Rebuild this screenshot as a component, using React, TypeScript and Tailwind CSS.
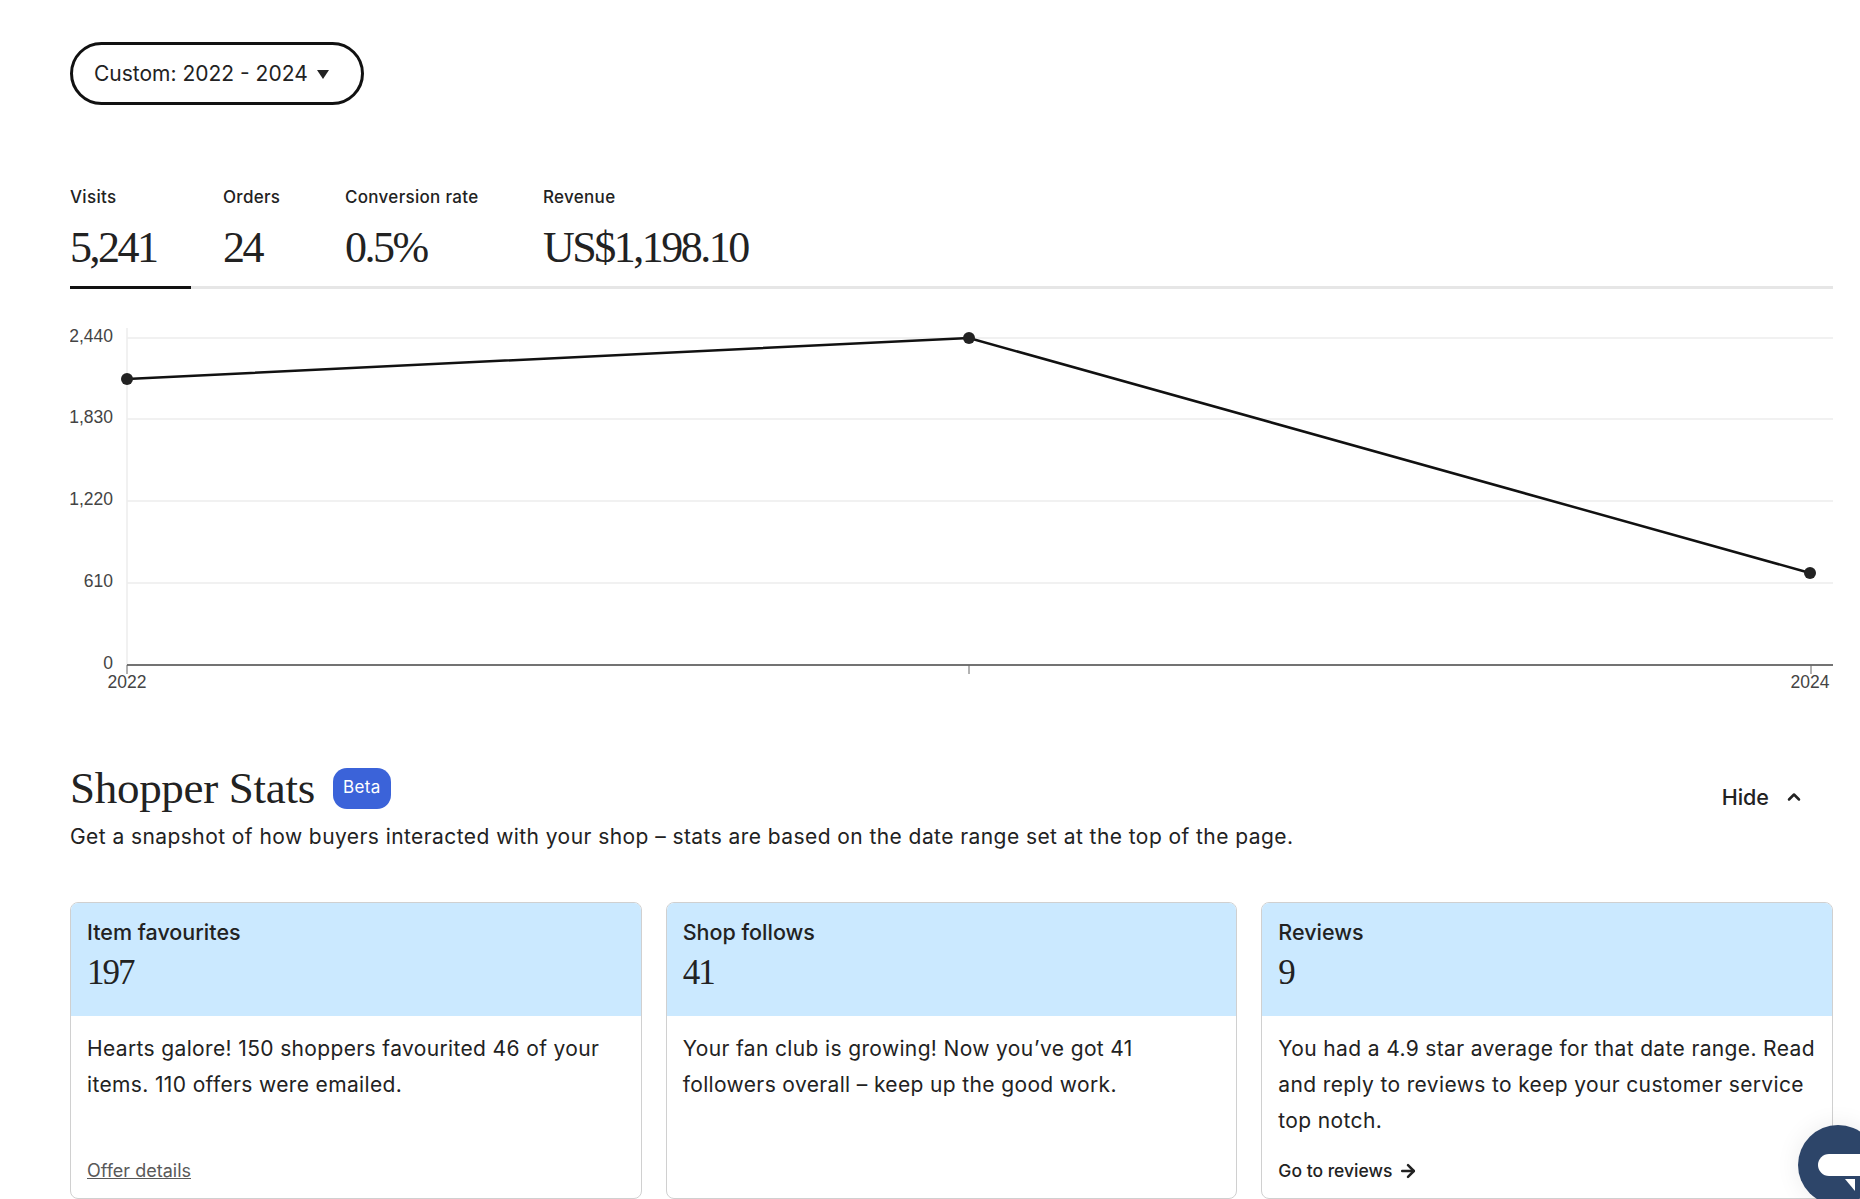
import { ChevronUp, ArrowRight } from "lucide-react";

const SANS = "font-['Inter','Liberation_Sans',sans-serif]";
const SERIF = "font-['Liberation_Serif',serif]";

const stats = [
  { label: "Visits", value: "5,241", width: "w-[121px] mr-[32px] border-b-[3px] border-[#111]" },
  { label: "Orders", value: "24", width: "w-[122px]" },
  { label: "Conversion rate", value: "0.5%", width: "w-[198px]" },
  { label: "Revenue", value: "US$1,198.10", width: "w-auto" },
];

const yTicks = [
  { label: "2,440", y: 18 },
  { label: "1,830", y: 99 },
  { label: "1,220", y: 181 },
  { label: "610", y: 263 },
];

function VisitsChart() {
  return (
    <svg width="1763" height="375" viewBox="0 0 1763 375" className="block">
      <line x1="57" y1="8" x2="57" y2="345" stroke="#ececec" strokeWidth="1.5" />
      {yTicks.map((t) => (
        <g key={t.label}>
          <line x1="57" y1={t.y} x2="1763" y2={t.y} stroke="#ececec" strokeWidth="1.5" />
          <text x="43" y={t.y + 4} textAnchor="end" fontFamily="Liberation Sans" fontSize="17.5" fill="#444">
            {t.label}
          </text>
        </g>
      ))}
      <text x="43" y="349" textAnchor="end" fontFamily="Liberation Sans" fontSize="17.5" fill="#444">
        0
      </text>
      <line x1="57" y1="345" x2="1763" y2="345" stroke="#444" strokeWidth="1.5" />
      <line x1="57" y1="345" x2="57" y2="354" stroke="#666" strokeWidth="1" />
      <line x1="899" y1="345" x2="899" y2="354" stroke="#666" strokeWidth="1" />
      <line x1="1741" y1="345" x2="1741" y2="354" stroke="#666" strokeWidth="1" />
      <text x="57" y="368" textAnchor="middle" fontFamily="Liberation Sans" fontSize="17.5" fill="#444">
        2022
      </text>
      <text x="1740" y="368" textAnchor="middle" fontFamily="Liberation Sans" fontSize="17.5" fill="#444">
        2024
      </text>
      <polyline points="57,59 899,18 1740,253" fill="none" stroke="#111" strokeWidth="2.5" />
      <circle cx="57" cy="59" r="6" fill="#222" />
      <circle cx="899" cy="18" r="6" fill="#222" />
      <circle cx="1740" cy="253" r="6" fill="#222" />
    </svg>
  );
}

function StatCard({ title, value, children, footer }: { title: string; value: string; children: React.ReactNode; footer: React.ReactNode }) {
  return (
    <div className="flex-1 h-[297px] border border-[#d0d0d0] rounded-lg overflow-hidden flex flex-col">
      <div className="bg-[#cbe9ff] h-[113px] px-4 pt-[14px] shrink-0">
        <div className="text-[21.5px] leading-[30px] font-medium text-[#222]">{title}</div>
        <div className={`${SERIF} text-[35px] leading-[44px] mt-[4px] tracking-[-2px] text-[#222]`}>{value}</div>
      </div>
      <div className="flex-1 px-4 pt-[15px] pb-[15px] flex flex-col justify-between">
        <p className="text-[21px] leading-[36px] tracking-[0.36px] text-[#222]">{children}</p>
        {footer}
      </div>
    </div>
  );
}

export default function App() {
  return (
    <div className={`${SANS} relative w-[1860px] h-[1199px] overflow-hidden bg-white text-[#222] pl-[70px] pr-[27px] pt-[42px]`}>
      <button className="h-[63px] w-[294px] border-[3px] border-[#111] rounded-full flex items-center pl-[21px] gap-[9px] text-[21px]">
        <span>Custom: 2022 - 2024</span>
        <svg className="mt-[2px]" width="12" height="9" viewBox="0 0 12 9">
          <path d="M0 0h12L6 9z" fill="#222" />
        </svg>
      </button>

      <div className="mt-[79px] border-b-[3px] border-[#e6e6e6] flex h-[105px]">
        {stats.map((s) => (
          <div key={s.label} className={`${s.width} h-[105px]`}>
            <div className="text-[17px] leading-[24px] mt-[1px] tracking-[0.3px] font-medium">{s.label}</div>
            <div className={`${SERIF} text-[44px] leading-[54px] mt-[12px] tracking-[-2.5px] whitespace-nowrap`}>{s.value}</div>
          </div>
        ))}
      </div>

      <div className="mt-[31px]">
        <VisitsChart />
      </div>

      <div className="flex items-center justify-between mt-[68px] pr-[29px]">
        <div className="flex items-center gap-[18px] h-[41px]">
          <h2 className={`${SERIF} text-[45px] leading-[52px] tracking-[-0.3px] text-[#222]`}>Shopper Stats</h2>
          <span className="bg-[#3b63d9] text-white text-[17px] tracking-[0.4px] h-[41px] w-[58px] rounded-[14px] flex items-center justify-center">Beta</span>
        </div>
        <div className="flex items-center gap-[15px] text-[21.5px] font-medium mt-[18px]">
          Hide
          <ChevronUp size={20} strokeWidth={3} />
        </div>
      </div>
      <p className="text-[21px] leading-[30px] tracking-[0.43px] mt-[9px]">
        Get a snapshot of how buyers interacted with your shop – stats are based on the date range set at the top of the page.
      </p>

      <div className="flex gap-[24px] mt-[50px]">
        <StatCard
          title="Item favourites"
          value="197"
          footer={<a className="text-[18px] leading-[24px] text-[#595959] underline">Offer details</a>}
        >
          Hearts galore! 150 shoppers favourited 46 of your items. 110 offers were emailed.
        </StatCard>
        <StatCard title="Shop follows" value="41" footer={null}>
          Your fan club is growing! Now you’ve got 41 followers overall – keep up the good work.
        </StatCard>
        <StatCard
          title="Reviews"
          value="9"
          footer={
            <a className="text-[17.5px] leading-[24px] font-medium flex items-center gap-[6px]">
              Go to reviews <ArrowRight size={20} strokeWidth={3} />
            </a>
          }
        >
          You had a 4.9 star average for that date range. Read and reply to reviews to keep your customer service top notch.
        </StatCard>
      </div>

      <div className="absolute left-[1798px] top-[1125px] w-[80px] h-[80px] rounded-full bg-[#2d4569] shadow-[0_0_24px_rgba(0,0,0,0.08)]">
        <div className="absolute left-[20px] top-[29px] w-[60px] h-[22px] rounded-[11px] bg-white" />
        <svg className="absolute left-[47px] top-[54px]" width="10" height="12" viewBox="0 0 10 12">
          <path d="M0 0h10v12z" fill="#fff" />
        </svg>
      </div>
    </div>
  );
}
